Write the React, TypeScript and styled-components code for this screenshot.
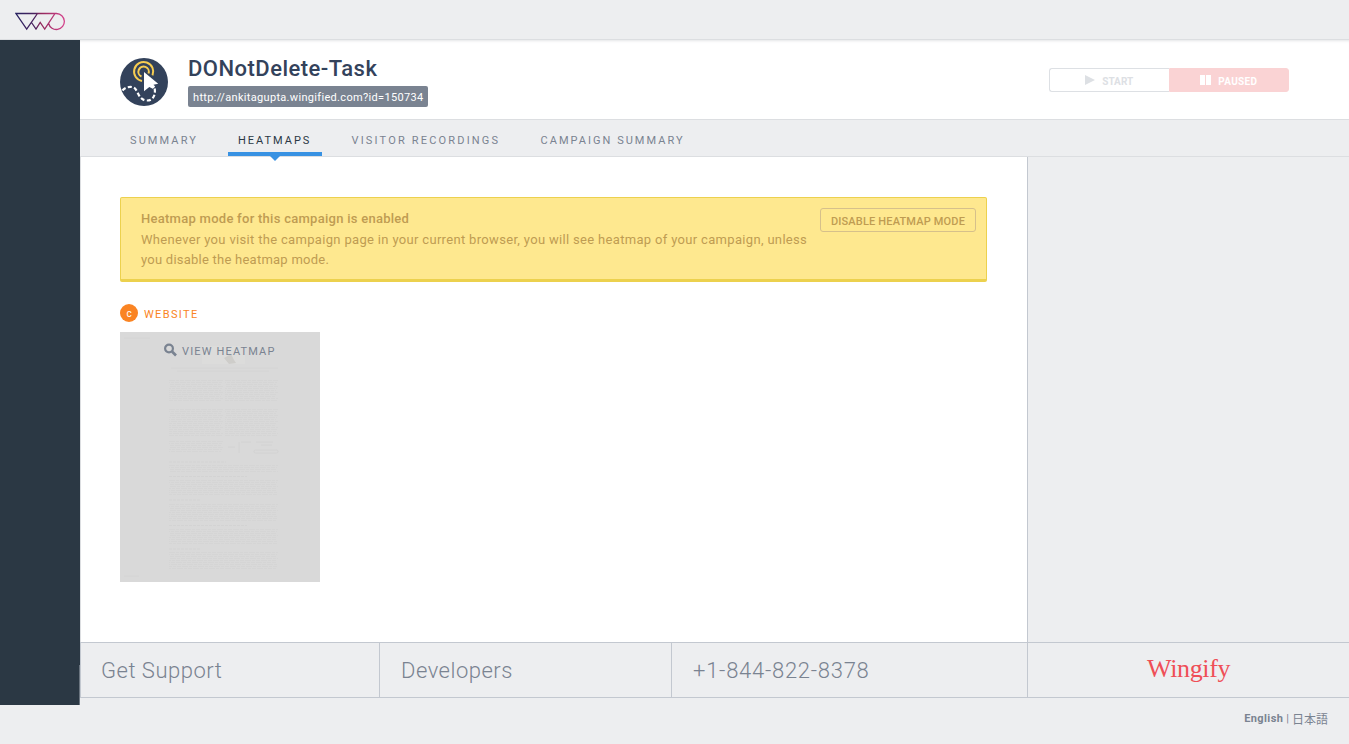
import React from "react";
import styled, { createGlobalStyle } from "styled-components";

const line = "#dcdee1";
const rule = "#c3c8d0";
const slate = "#7a8391";
const panel = "#edeef0";

const Global = createGlobalStyle`
  * { box-sizing: border-box; }
  body { margin: 0; background: ${panel}; font-family: Roboto, "Noto Sans CJK JP", sans-serif; color: ${slate}; }
  a { color: inherit; text-decoration: none; }
`;

const Page = styled.div`
  width: 1349px;
  height: 744px;
  overflow: hidden;
  background: ${panel};
`;
const TopBar = styled.header`
  height: 40px;
  padding: 12px 0 0 15px;
  border-bottom: 1px solid ${line};
  svg { display: block; }
`;
const Body = styled.div`
  display: flex;
  align-items: flex-start;
`;
const Sidebar = styled.aside`
  width: 80px;
  height: 665px;
  background: linear-gradient(#6b7580, #6b7580) right bottom / 1px 40px no-repeat #2b3844;
`;
const Main = styled.main`
  flex: 1;
  min-width: 0;
`;
const Header = styled.section`
  display: flex;
  height: 80px;
  padding: 18px 60px 0 40px;
  background: #fff;
  border-bottom: 1px solid ${line};
  box-shadow: inset 0 3px 3px -2px #e4e5e7;
`;
const Heading = styled.div`
  margin-left: 20px;
  flex: 1;
`;
const Title = styled.h1`
  margin: 0;
  font-size: 22px;
  line-height: 22px;
  height: 28px;
  font-weight: 500;
  letter-spacing: 0.48px;
  color: #33425b;
`;
const UrlTag = styled.a`
  display: inline-block;
  vertical-align: top;
  width: 240px;
  height: 21px;
  padding-left: 5px;
  border-radius: 2px;
  background: #7a8391;
  color: #fff;
  font-size: 11px;
  line-height: 23px;
  letter-spacing: 0.32px;
  white-space: nowrap;
`;
const StateSwitch = styled.div`
  display: flex;
  width: 240px;
  height: 24px;
  margin-top: 10px;
`;
const StateButton = styled.button<{ $paused?: boolean }>`
  display: flex;
  align-items: center;
  justify-content: center;
  gap: 7px;
  flex: 1;
  padding: 2px 0 0;
  border: 1px solid ${(p) => (p.$paused ? "#fad3d4" : "#dde0e4")};
  border-right-width: ${(p) => (p.$paused ? 1 : 0)}px;
  border-radius: ${(p) => (p.$paused ? "0 3px 3px 0" : "3px 0 0 3px")};
  background: ${(p) => (p.$paused ? "#fad3d4" : "#fff")};
  color: ${(p) => (p.$paused ? "#fff" : "#dde0e4")};
  font: 700 10px Roboto, sans-serif;
  letter-spacing: ${(p) => (p.$paused ? 0.3 : 0.05)}px;
  svg { margin-top: -2px; }
`;
const Tabs = styled.nav`
  display: flex;
  height: 37px;
  padding-left: 40px;
  border-bottom: 1px solid ${line};
`;
const Tab = styled.a<{ $w: number; $active?: boolean; $track: number }>`
  position: relative;
  width: ${(p) => p.$w}px;
  height: 36px;
  margin-right: ${(p) => (p.$active ? 19.5 : 19)}px;
  padding-left: 10px;
  font-size: 11px;
  line-height: 42px;
  letter-spacing: ${(p) => p.$track}px;
  white-space: nowrap;
  color: ${(p) => (p.$active ? "#2b3844" : slate)};
  border-bottom: 4px solid ${(p) => (p.$active ? "#3892e3" : "transparent")};
  &::after {
    content: "";
    display: ${(p) => (p.$active ? "block" : "none")};
    position: absolute;
    left: 41px;
    top: 35px;
    border: 6px solid transparent;
    border-top-color: #3892e3;
    border-bottom-width: 0;
  }
`;
const Columns = styled.div`
  display: flex;
  height: 485px;
`;
const Content = styled.section`
  width: 948px;
  padding: 40px 40px 0 39px;
  background: #fff;
  border-left: 1px solid ${line};
  border-right: 1px solid ${rule};
`;
const Notice = styled.div`
  display: flex;
  justify-content: space-between;
  width: 867px;
  height: 85px;
  padding: 10px 10px 0 20px;
  background: #fee88f;
  border: 1px solid #ecd14e;
  border-bottom-width: 3px;
  border-radius: 2px;
  color: #bf9c52;
`;
const NoticeText = styled.div`
  padding-top: 1px;
  font-size: 13px;
  line-height: 20px;
  white-space: nowrap;
`;
const NoticeLine = styled.div<{ $strong?: boolean; $track: number }>`
  height: ${(p) => (p.$strong ? 21 : 20)}px;
  font-weight: ${(p) => (p.$strong ? 500 : 400)};
  letter-spacing: ${(p) => p.$track}px;
`;
const DisableButton = styled.button`
  width: 156px;
  height: 24px;
  padding: 2px 0 0;
  background: transparent;
  border: 1px solid #d6c08b;
  border-radius: 3px;
  color: #bf9c52;
  font: 500 11px Roboto, sans-serif;
  letter-spacing: 0.17px;
  white-space: nowrap;
`;
const Variation = styled.div`
  display: flex;
  align-items: center;
  height: 18px;
  margin-top: 22px;
  color: #fa8423;
  font-size: 11px;
  letter-spacing: 1.35px;
`;
const Badge = styled.span`
  width: 18px;
  height: 18px;
  margin-right: 6px;
  border-radius: 50%;
  background: #fa8423;
  color: #fff;
  font-size: 10px;
  font-weight: 400;
  line-height: 19px;
  letter-spacing: 0;
  text-align: center;
`;
const VariationName = styled.span`
  padding-top: 2px;
`;
const Preview = styled.div`
  position: relative;
  width: 200px;
  height: 250px;
  margin-top: 10px;
  background: #d9d9d9;
`;
const PreviewArt = styled.svg`
  display: block;
`;
const ViewLink = styled.a`
  position: absolute;
  top: 12px;
  left: 44px;
  display: flex;
  align-items: center;
  gap: 5px;
  font-size: 11px;
  line-height: 16px;
  letter-spacing: 1.15px;
  white-space: nowrap;
  svg { margin-top: -4px; }
`;
const Footer = styled.footer`
  display: flex;
  height: 56px;
  border: 1px solid ${rule};
  border-right: 0;
`;
const FooterCell = styled.a<{ $w?: number; $track?: number }>`
  width: ${(p) => (p.$w ? p.$w + "px" : "auto")};
  flex: ${(p) => (p.$w ? "none" : 1)};
  padding-left: 20px;
  border-right: ${(p) => (p.$w ? 1 : 0)}px solid ${rule};
  font-size: 22px;
  font-weight: 300;
  line-height: 55px;
  letter-spacing: ${(p) => p.$track ?? 0}px;
  white-space: nowrap;
  & + & { padding-left: 21px; }
`;
const Brand = styled.a`
  padding-left: 119px;
  color: #ef4e57;
  font-family: "Liberation Serif", serif;
  font-size: 26px;
  line-height: 51px;
  letter-spacing: -0.35px;
`;
const Languages = styled.div`
  display: flex;
  justify-content: flex-end;
  gap: 3px;
  padding: 12px 21px 0 0;
  font-size: 11px;
  line-height: 18px;
  b { font-weight: 700; letter-spacing: 0.4px; }
  span { font-size: 12px; line-height: 17px; font-family: "Noto Sans CJK JP", sans-serif; }
`;

const Logo = () => (
  <svg width="51" height="19" viewBox="0 0 51 19" fill="none" strokeWidth="1.3">
    <defs>
      <linearGradient id="brand" x1="0" y1="0" x2="51" y2="0" gradientUnits="userSpaceOnUse">
        <stop offset="0" stopColor="#262261" />
        <stop offset=".4" stopColor="#4c225e" />
        <stop offset=".5" stopColor="#8f285b" />
        <stop offset="1" stopColor="#d9448f" />
      </linearGradient>
    </defs>
    <path stroke="url(#brand)" d="M22.500 1.500 11.700 17.200 1 1.500H41.500a8 8 0 1 1-7.900 10M16.500 10.500 21 17l4.200-6.500L29.700 17 40 1.500" />
  </svg>
);

const CampaignIcon = () => (
  <svg width="48" height="48" viewBox="0 0 48 48" fill="none">
    <circle cx="24" cy="24" r="24" fill="#33425b" />
    <path d="M22 23A9.600 9.600 0 1 1 32.500 17.300" stroke="#f7cd51" strokeWidth="2" />
    <path d="M21.500 18.500A5.200 5.200 0 1 1 28.500 15.500" stroke="#f7cd51" strokeWidth="2" />
    <path d="M2.500 32.500C5 29 12 27.500 15 30.500S19 42 26.500 42.500C34 43 36.500 35 34 28" stroke="#fff" strokeWidth="2.200" strokeDasharray="4 2.300" />
    <path d="M24 14v19.300l5.300-4.300 3.500 1.800 2.400-2-1.700-2L38.200 25.700z" fill="#fff" />
  </svg>
);

const paragraphs: [number, number, number, number][] = [
  [49, 48, 54, 22], [105, 48, 53, 22], [49, 77, 54, 29], [105, 77, 53, 29],
  [49, 109, 54, 12], [49, 133, 109, 8], [49, 148, 109, 17], [49, 172, 109, 18],
  [49, 197, 109, 16], [49, 220, 109, 19],
];

const PageThumbnail = () => (
  <PreviewArt width="200" height="250">
    <rect x="82" y="14" width="43" height="18" fill="#dcdcdb" />
    <path d="M104 26l7-4 3 6 2 3-7 1z" fill="#cecdca" />
    <path d="M4 6h26M51 36h107M57 39h92M4 244h15" stroke="#d4d4d4" />
    <path d="M49 130h57M49 144.500h78M49 168h31M49 193.500h78M49 217h31" stroke="#d3d3d3" strokeDasharray="3 1" />
    {paragraphs.map(([x, y, w, h]) =>
      Array.from({ length: Math.floor(h / 2) }, (_, i) => (
        <line key={`${x}-${y}-${i}`} x1={x} x2={x + w - (i % 3)} y1={y + i * 2 + 0.5} y2={y + i * 2 + 0.5} stroke="#d5d5d5" strokeDasharray="6 1 3 1 4 1" strokeDashoffset={i * 5} />
      ))
    )}
    <path d="M108 115h7M119 110v11M121 110h10M136 110h17M141 113h11" stroke="#d2d2d2" />
    <rect x="134" y="118" width="24" height="3" rx="1.500" stroke="#d2d2d2" fill="none" />
  </PreviewArt>
);

const SearchIcon = () => (
  <svg width="13" height="14" viewBox="0 0 13 14" fill="none" stroke={slate}>
    <circle cx="5" cy="5.500" r="3.900" strokeWidth="2.200" />
    <path d="m8 8.500 4 4" strokeWidth="2.600" />
  </svg>
);

export default function App() {
  return (
    <Page>
      <Global />
      <TopBar><Logo /></TopBar>
      <Body>
        <Sidebar />
        <Main>
          <Header>
            <CampaignIcon />
            <Heading>
              <Title>DONotDelete-Task</Title>
              <UrlTag>http://ankitagupta.wingified.com?id=150734</UrlTag>
            </Heading>
            <StateSwitch>
              <StateButton>
                <svg width="10" height="10"><path d="M0 0 10 5 0 10z" fill="#dde0e4" /></svg>
                START
              </StateButton>
              <StateButton $paused>
                <svg width="11" height="10"><path d="M0 0h5v10H0zM6 0h5v10H6z" fill="#fff" /></svg>
                PAUSED
              </StateButton>
            </StateSwitch>
          </Header>
          <Tabs>
            <Tab $w={89} $track={2.1}>SUMMARY</Tab>
            <Tab $w={94} $track={1.98} $active>HEATMAPS</Tab>
            <Tab $w={170} $track={2.18}>VISITOR RECORDINGS</Tab>
            <Tab $w={160} $track={2.03}>CAMPAIGN SUMMARY</Tab>
          </Tabs>
          <Columns>
            <Content>
              <Notice>
                <NoticeText>
                  <NoticeLine $strong $track={0.27}>Heatmap mode for this campaign is enabled</NoticeLine>
                  <NoticeLine $track={0.325}>Whenever you visit the campaign page in your current browser, you will see heatmap of your campaign, unless</NoticeLine>
                  <NoticeLine $track={0.24}>you disable the heatmap mode.</NoticeLine>
                </NoticeText>
                <DisableButton>DISABLE HEATMAP MODE</DisableButton>
              </Notice>
              <Variation><Badge>c</Badge><VariationName>WEBSITE</VariationName></Variation>
              <Preview>
                <PageThumbnail />
                <ViewLink><SearchIcon />VIEW HEATMAP</ViewLink>
              </Preview>
            </Content>
          </Columns>
          <Footer>
            <FooterCell $w={299} $track={0.5}>Get Support</FooterCell>
            <FooterCell $w={292} $track={0.5}>Developers</FooterCell>
            <FooterCell $w={356} $track={0.73}>+1-844-822-8378</FooterCell>
            <Brand>Wingify</Brand>
          </Footer>
          <Languages><b>English</b>|<span>日本語</span></Languages>
        </Main>
      </Body>
    </Page>
  );
}
